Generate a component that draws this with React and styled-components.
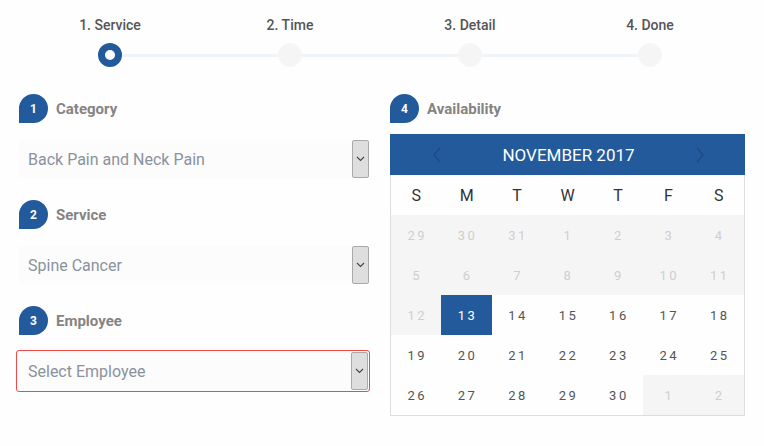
import React from 'react';
import styled, { createGlobalStyle } from 'styled-components';

const GlobalStyle = createGlobalStyle`
  body {
    margin: 0;
    background: #fefefe;
    font-family: Roboto, 'Liberation Sans', sans-serif;
  }
`;

const Page = styled.div`
  width: 764px;
  height: 446px;
  padding: 17px 0 0 19px;
  box-sizing: border-box;
`;

const Stepper = styled.div`
  display: grid;
  grid-template-columns: repeat(4, 180px);
  margin-left: 1px;
`;

const Step = styled.div`
  position: relative;
  display: flex;
  flex-direction: column;
  align-items: center;
  gap: 10px;
`;

const StepLabel = styled.div`
  font-size: 14px;
  font-weight: 500;
  color: #555;
  line-height: 16px;
`;

const StepTrack = styled.div`
  position: relative;
  width: 100%;
  height: 24px;
  display: flex;
  justify-content: center;
  align-items: center;
  &::before {
    content: '';
    position: absolute;
    left: ${(p) => (p.$first ? '50%' : '0')};
    right: ${(p) => (p.$last ? '50%' : '0')};
    top: 11px;
    height: 3px;
    background: #f1f4f6;
  }
`;

const StepDot = styled.div`
  position: relative;
  width: 24px;
  height: 24px;
  border-radius: 50%;
  box-sizing: border-box;
  background: ${(p) => (p.$active ? '#fff' : '#f5f5f5')};
  border: ${(p) => (p.$active ? '7px solid #235a9b' : '1px solid #f7f7f7')};
`;

const Main = styled.div`
  display: flex;
  gap: 21px;
  margin-top: 27px;
`;

const LeftCol = styled.div`
  width: 350px;
  display: flex;
  flex-direction: column;
`;

const Field = styled.div`
  display: flex;
  flex-direction: column;
  gap: 17px;
  margin-bottom: 22px;
`;

const Heading = styled.div`
  display: flex;
  align-items: center;
  gap: 8px;
`;

const Badge = styled.div`
  width: 29px;
  height: 29px;
  border-radius: 15px 15px 15px 0;
  background: #235a9b;
  color: #fff;
  font-size: 12px;
  font-weight: 700;
  display: flex;
  align-items: center;
  justify-content: center;
`;

const HeadingText = styled.div`
  font-size: 15px;
  font-weight: 700;
  color: #868383;
`;

const Select = styled.div`
  height: 38px;
  display: flex;
  align-items: stretch;
  background: #fcfcfc;
  box-sizing: border-box;
  ${(p) =>
    p.$error &&
    `
    border: 1px solid #ee4a4a;
    border-radius: 3px;
    height: 42px;
    margin: -2px -1px -1px -3px;
    padding: 1px 1px 1px 2px;
  `}
`;

const SelectText = styled.div`
  flex: 1;
  display: flex;
  align-items: center;
  padding-left: 9px;
  font-size: 16px;
  color: #8a929c;
`;

const SelectArrow = styled.div`
  width: 17px;
  background: #dedede;
  border: 1px solid #a9a9a9;
  border-radius: 2px;
  box-sizing: border-box;
  display: flex;
  align-items: center;
  justify-content: center;
  color: #444;
`;

const RightCol = styled.div`
  width: 355px;
  display: flex;
  flex-direction: column;
  gap: 11px;
`;

const Calendar = styled.div`
  border: 1px solid #dddddd;
  border-top: none;
`;

const CalHeader = styled.div`
  height: 41px;
  background: #235a9b;
  margin: 0 -1px;
  display: flex;
  align-items: center;
  justify-content: space-between;
  padding: 0 40px 0 42px;
`;

const MonthTitle = styled.div`
  color: #fff;
  font-size: 17px;
`;

const Grid = styled.div`
  display: grid;
  grid-template-columns: repeat(7, 1fr);
`;

const WeekDay = styled.div`
  height: 40px;
  display: flex;
  align-items: center;
  justify-content: center;
  font-size: 16px;
  color: #333;
`;

const Day = styled.div`
  height: 40px;
  display: flex;
  align-items: center;
  justify-content: center;
  font-size: 13px;
  letter-spacing: 2.5px;
  padding-left: 2px;
  background: ${(p) => (p.$selected ? '#235a9b' : p.$muted ? '#f5f5f5' : 'transparent')};
  color: ${(p) => (p.$selected ? '#fff' : p.$muted ? '#cfcfcf' : '#555')};
`;

const Chevron = ({ dir }) => (
  <svg width="10" height="16" viewBox="0 0 10 16">
    <path
      d={dir === 'left' ? 'M8 1 L2 8 L8 15' : 'M2 1 L8 8 L2 15'}
      fill="none"
      stroke="#1c4b85"
      strokeWidth="1.3"
    />
  </svg>
);

const DownArrow = () => (
  <svg width="9" height="6" viewBox="0 0 9 6">
    <path d="M1 1 L4.5 4.5 L8 1" fill="none" stroke="#444" strokeWidth="1.1" />
  </svg>
);

const steps = ['1. Service', '2. Time', '3. Detail', '4. Done'];

const fields = [
  { n: 1, label: 'Category', value: 'Back Pain and Neck Pain' },
  { n: 2, label: 'Service', value: 'Spine Cancer' },
  { n: 3, label: 'Employee', value: 'Select Employee', error: true },
];

const days = [
  [29, true], [30, true], [31, true], [1, true], [2, true], [3, true], [4, true],
  [5, true], [6, true], [7, true], [8, true], [9, true], [10, true], [11, true],
  [12, true], [13], [14], [15], [16], [17], [18],
  [19], [20], [21], [22], [23], [24], [25],
  [26], [27], [28], [29], [30], [1, true], [2, true],
];

export default function App() {
  return (
    <Page>
      <GlobalStyle />
      <Stepper>
        {steps.map((s, i) => (
          <Step key={s}>
            <StepLabel>{s}</StepLabel>
            <StepTrack $first={i === 0} $last={i === steps.length - 1}>
              <StepDot $active={i === 0} />
            </StepTrack>
          </Step>
        ))}
      </Stepper>
      <Main>
        <LeftCol>
          {fields.map((f) => (
            <Field key={f.n}>
              <Heading>
                <Badge>{f.n}</Badge>
                <HeadingText>{f.label}</HeadingText>
              </Heading>
              <Select $error={f.error}>
                <SelectText>{f.value}</SelectText>
                <SelectArrow>
                  <DownArrow />
                </SelectArrow>
              </Select>
            </Field>
          ))}
        </LeftCol>
        <RightCol>
          <Heading>
            <Badge>4</Badge>
            <HeadingText>Availability</HeadingText>
          </Heading>
          <Calendar>
            <CalHeader>
              <Chevron dir="left" />
              <MonthTitle>NOVEMBER 2017</MonthTitle>
              <Chevron dir="right" />
            </CalHeader>
            <Grid>
              {['S', 'M', 'T', 'W', 'T', 'F', 'S'].map((d, i) => (
                <WeekDay key={i}>{d}</WeekDay>
              ))}
              {days.map(([d, muted], i) => (
                <Day key={i} $muted={muted} $selected={d === 13 && !muted}>
                  {d}
                </Day>
              ))}
            </Grid>
          </Calendar>
        </RightCol>
      </Main>
    </Page>
  );
}
